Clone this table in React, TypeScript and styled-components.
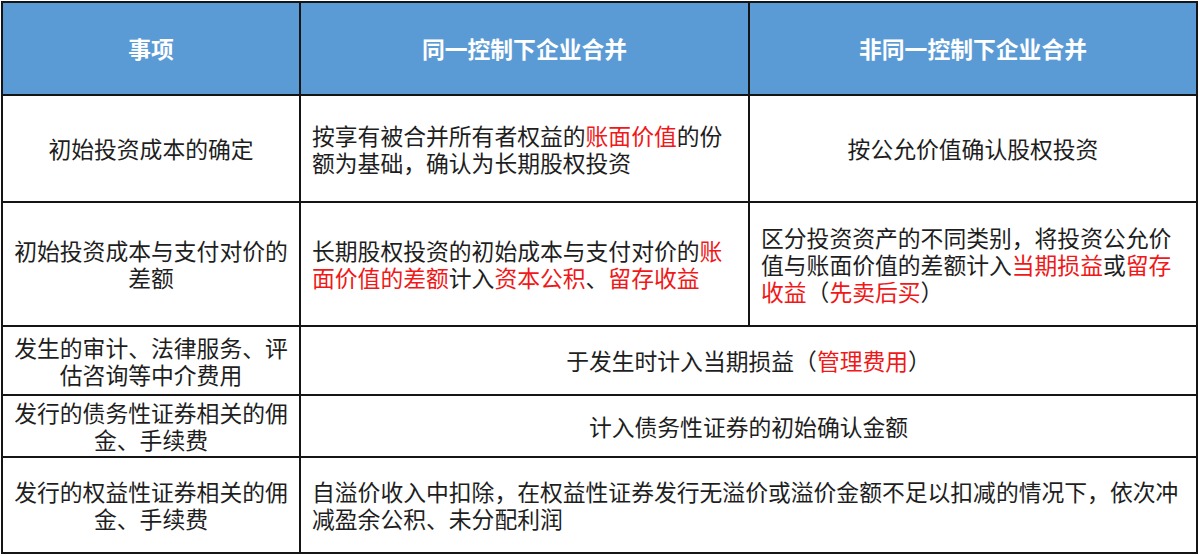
import React from 'react';
import styled, { createGlobalStyle } from 'styled-components';

const GlobalStyle = createGlobalStyle`
  html, body {
    margin: 0;
    padding: 0;
    background: #ffffff;
  }
  body {
    font-family: "Noto Sans CJK SC", "Noto Sans", sans-serif;
  }
`;

const Page = styled.div`
  padding: 1px;
`;

const Table = styled.table`
  width: 1197px;
  table-layout: fixed;
  border-collapse: collapse;
  border: 2px solid #151515;
  font-size: 22.8px;
  line-height: 27px;
  color: #1e1e1e;
`;

const HeadCell = styled.th`
  background: #5b9bd5;
  color: #ffffff;
  font-weight: 700;
  text-align: center;
  vertical-align: middle;
  border: 2px solid #151515;
  padding: 0 8px;
`;

const Row = styled.tr<{ $h: number }>`
  height: ${p => p.$h}px;
`;

const Cell = styled.td<{ $align?: 'left' | 'center' }>`
  border: 2px solid #151515;
  text-align: ${p => p.$align || 'center'};
  vertical-align: middle;
  padding: ${p => (p.$align === 'left' ? '0 8px 0 11px' : '0 8px')};
  white-space: nowrap;
`;

const Red = styled.span`
  color: #f01818;
`;

export default function App() {
  return (
    <Page>
      <GlobalStyle />
      <Table>
        <colgroup>
          <col style={{ width: 298 }} />
          <col style={{ width: 449 }} />
          <col style={{ width: 448 }} />
        </colgroup>
        <thead>
          <Row $h={93}>
            <HeadCell>事项</HeadCell>
            <HeadCell>同一控制下企业合并</HeadCell>
            <HeadCell>非同一控制下企业合并</HeadCell>
          </Row>
        </thead>
        <tbody>
          <Row $h={107}>
            <Cell>初始投资成本的确定</Cell>
            <Cell $align="left">
              按享有被合并所有者权益的<Red>账面价值</Red>的份<br />
              额为基础，确认为长期股权投资
            </Cell>
            <Cell>按公允价值确认股权投资</Cell>
          </Row>
          <Row $h={124}>
            <Cell>
              初始投资成本与支付对价的<br />
              差额
            </Cell>
            <Cell $align="left">
              长期股权投资的初始成本与支付对价的<Red>账</Red><br />
              <Red>面价值的差额</Red>计入<Red>资本公积</Red>、<Red>留存收益</Red>
            </Cell>
            <Cell $align="left">
              区分投资资产的不同类别，将投资公允价<br />
              值与账面价值的差额计入<Red>当期损益</Red>或<Red>留存</Red><br />
              <Red>收益</Red>（<Red>先卖后买</Red>）
            </Cell>
          </Row>
          <Row $h={69}>
            <Cell>
              发生的审计、法律服务、评<br />
              估咨询等中介费用
            </Cell>
            <Cell colSpan={2}>
              于发生时计入当期损益（<Red>管理费用</Red>）
            </Cell>
          </Row>
          <Row $h={62}>
            <Cell>
              发行的债务性证券相关的佣<br />
              金、手续费
            </Cell>
            <Cell colSpan={2}>计入债务性证券的初始确认金额</Cell>
          </Row>
          <Row $h={96}>
            <Cell>
              发行的权益性证券相关的佣<br />
              金、手续费
            </Cell>
            <Cell colSpan={2} $align="left">
              自溢价收入中扣除，在权益性证券发行无溢价或溢价金额不足以扣减的情况下，依次冲<br />
              减盈余公积、未分配利润
            </Cell>
          </Row>
        </tbody>
      </Table>
    </Page>
  );
}
